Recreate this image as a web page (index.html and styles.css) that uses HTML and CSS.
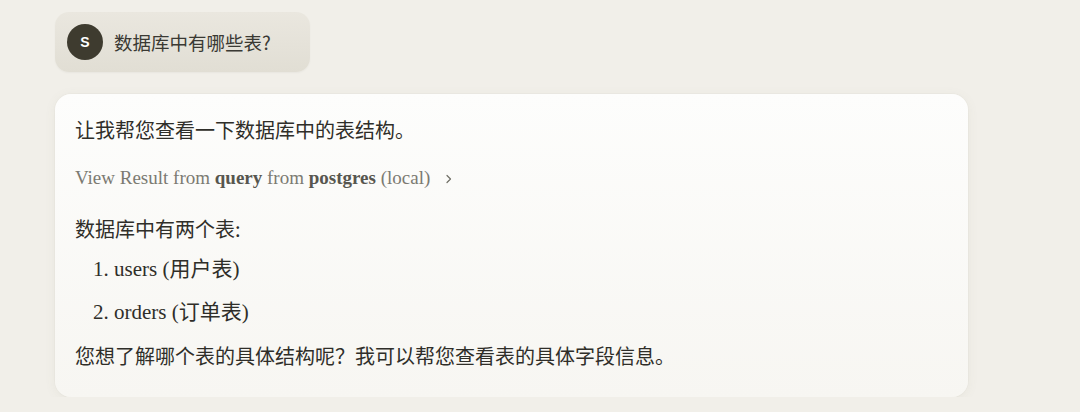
FILE: index.html
```html
<!DOCTYPE html>
<html>
<head>
    <title>Chat</title>
    <link rel="stylesheet" href="styles.css">
</head>
<body>
    <div class="thread">
        <div class="user-msg">
            <span class="avatar">S</span>
            <span class="user-text">数据库中有哪些表?</span>
        </div>

        <div class="reply">
            <p class="line">让我帮您查看一下数据库中的表结构。</p>
            <div class="tool-result">View Result from <b>query</b> from <b>postgres</b> (local)<svg class="chevron" width="10" height="12" viewBox="0 0 10 12"><path d="M3 2.5 L6.5 6 L3 9.5" fill="none" stroke="currentColor" stroke-width="1.2" stroke-linecap="round" stroke-linejoin="round"/></svg></div>
            <p class="line heading">数据库中有两个表:</p>
            <ol class="tables">
                <li>users (用户表)</li>
                <li>orders (订单表)</li>
            </ol>
            <p class="line">您想了解哪个表的具体结构呢？我可以帮您查看表的具体字段信息。</p>
        </div>
    </div>
</body>
</html>
```

FILE: styles.css
```css
body {
    margin: 0;
    background: #f1efe9;
    font-family: "Liberation Serif", "Noto Sans CJK SC", serif;
    color: #2f2e29;
}
.thread {
    padding: 12px 0 0 55px;
    width: 913px;
}
.user-msg {
    display: inline-flex;
    align-items: center;
    gap: 11px;
    height: 60px;
    padding: 0 39px 0 12px;
    border-radius: 14px;
    background: linear-gradient(180deg, #eae7df 0%, #e1ded4 100%);
    box-shadow: 0 1px 2px rgba(0, 0, 0, 0.04);
}
.avatar {
    width: 36px;
    height: 36px;
    border-radius: 50%;
    background: #3e3b2f;
    color: #fff;
    display: flex;
    align-items: center;
    justify-content: center;
    font-family: "Liberation Sans", sans-serif;
    font-weight: bold;
    font-size: 14px;
}
.user-text {
    font-family: "Noto Sans CJK SC", sans-serif;
    font-size: 18.5px;
    color: #3a3933;
}
.reply {
    margin-top: 22px;
    padding: 20px 20px 25px;
    border-radius: 16px;
    background: linear-gradient(180deg, #fdfdfc 0%, #f7f6f2 100%);
    box-shadow: 0 2px 12px rgba(120, 110, 80, 0.07), 0 0 0 1px rgba(0, 0, 0, 0.015);
}
.line {
    margin: 0;
    font-family: "Noto Sans CJK SC", sans-serif;
    font-size: 20px;
    line-height: 32px;
}
.heading {
    margin-top: 22px;
}
.tool-result {
    margin-top: 19px;
    line-height: 26px;
    font-size: 19px;
    color: #7b7a72;
}
.tool-result b {
    font-weight: bold;
    color: #57564f;
}
.chevron {
    margin-left: 14px;
    color: #6f6e66;
    vertical-align: -1px;
}
.tables {
    margin: 3px 0 6px;
    padding-left: 39px;
    font-size: 21px;
    line-height: 43px;
}
```
